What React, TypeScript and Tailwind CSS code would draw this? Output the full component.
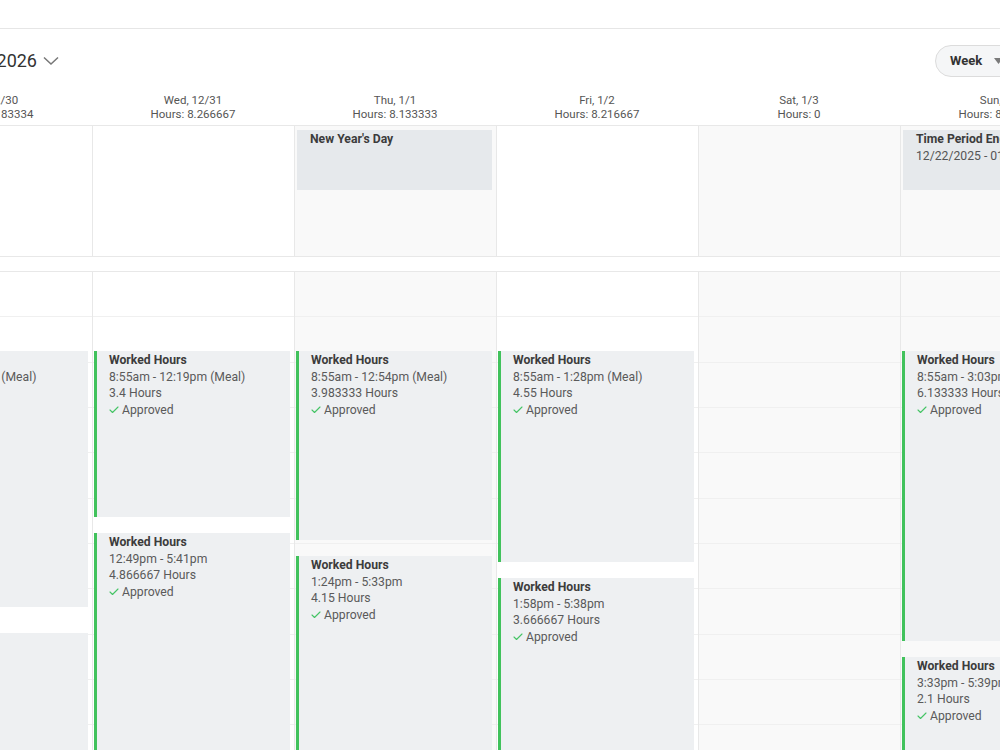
import { Check } from "lucide-react";

type Shift = { top: number; bottom: number; time: string; hours: string };
type Day = {
  label: string;
  hours: string;
  shaded: boolean;
  allDay?: { title: string; sub?: string };
  shifts: Shift[];
};

// y where the hourly grid starts (page coords), events are placed from it
const GRID_TOP = 272;

const days: Day[] = [
  {
    label: "Tue, 12/30",
    hours: "8.183334",
    shaded: false,
    shifts: [
      { top: 351, bottom: 607, time: "8:55am - 2:26pm (Meal)", hours: "5.133333" },
      { top: 633, bottom: 820, time: "2:56pm - 5:59pm", hours: "3.05" },
    ],
  },
  {
    label: "Wed, 12/31",
    hours: "8.266667",
    shaded: false,
    shifts: [
      { top: 351, bottom: 517, time: "8:55am - 12:19pm (Meal)", hours: "3.4" },
      { top: 533, bottom: 820, time: "12:49pm - 5:41pm", hours: "4.866667" },
    ],
  },
  {
    label: "Thu, 1/1",
    hours: "8.133333",
    shaded: true,
    allDay: { title: "New Year's Day" },
    shifts: [
      { top: 351, bottom: 540, time: "8:55am - 12:54pm (Meal)", hours: "3.983333" },
      { top: 556, bottom: 820, time: "1:24pm - 5:33pm", hours: "4.15" },
    ],
  },
  {
    label: "Fri, 1/2",
    hours: "8.216667",
    shaded: false,
    shifts: [
      { top: 351, bottom: 562, time: "8:55am - 1:28pm (Meal)", hours: "4.55" },
      { top: 578, bottom: 820, time: "1:58pm - 5:38pm", hours: "3.666667" },
    ],
  },
  { label: "Sat, 1/3", hours: "0", shaded: true, shifts: [] },
  {
    label: "Sun, 1/4",
    hours: "8.233333",
    shaded: true,
    allDay: { title: "Time Period Ending", sub: "12/22/2025 - 01/04/2026" },
    shifts: [
      { top: 351, bottom: 641, time: "8:55am - 3:03pm", hours: "6.133333" },
      { top: 657, bottom: 820, time: "3:33pm - 5:39pm", hours: "2.1" },
    ],
  },
];

function ShiftCard({ shift }: { shift: Shift }) {
  return (
    <div
      className="absolute left-[1px] right-[4px] border-l-[3px] border-[#41c25c] bg-[#eef0f2] pl-[12px] pt-[1px] text-[12.2px] leading-[16.5px] text-[#5a5a5a]"
      style={{ top: shift.top - GRID_TOP, height: shift.bottom - shift.top }}
    >
      <p className="whitespace-nowrap font-bold text-[#3c3c3c]">Worked Hours</p>
      <p className="whitespace-nowrap">{shift.time}</p>
      <p className="whitespace-nowrap">{shift.hours} Hours</p>
      <p className="flex items-center gap-[2px] whitespace-nowrap">
        <Check size={12} strokeWidth={2.25} className="-ml-[1px] text-[#45c465]" />
        Approved
      </p>
    </div>
  );
}

function DayColumn({ day }: { day: Day }) {
  const shade = day.shaded ? "bg-[#f9f9f9]" : "bg-white";
  return (
    <div className="w-[202px] shrink-0">
      {/* day header */}
      <div className="h-[35px] border-b border-[#e8e8e8] pt-[2px] text-center text-[11.5px] leading-[14px] text-[#555]">
        <p>{day.label}</p>
        <p>Hours: {day.hours}</p>
      </div>

      {/* all-day strip */}
      <div className={`h-[131px] border-b border-l border-[#e8e8e8] pt-[4px] ${shade}`}>
        {day.allDay && (
          <div className="ml-[2px] mr-[4px] h-[60px] overflow-hidden whitespace-nowrap bg-[#e6e9ec] pl-[13px] pt-[1px] text-[12.2px] leading-[16.5px] text-[#555]">
            <p className="font-bold text-[#3c3c3c]">{day.allDay.title}</p>
            {day.allDay.sub && <p>{day.allDay.sub}</p>}
          </div>
        )}
      </div>

      <div className="h-[15px] border-b border-[#e8e8e8] bg-white" />

      {/* hourly grid */}
      <div className={`relative border-l border-[#e8e8e8] ${shade}`}>
        {Array.from({ length: 11 }).map((_, i) => (
          <div key={i} className="h-[45.33px] border-b border-[#f0f0f0]" />
        ))}
        {day.shifts.map((s) => (
          <ShiftCard key={s.top} shift={s} />
        ))}
      </div>
    </div>
  );
}

export default function App() {
  return (
    <div className="h-[750px] w-[1000px] overflow-hidden bg-white font-['Roboto','Liberation_Sans',sans-serif] text-[#333]">
      <div className="h-[29px] border-b border-[#e6e6e6]" />

      {/* toolbar */}
      <div className="flex h-[62px] items-center justify-between">
        <div className="flex items-center">
          <div className="flex w-[37px] justify-end whitespace-nowrap text-[18px] text-[#333]">
            Dec 29, 2025 - Jan 4, 2026
          </div>
          <svg width="16" height="10" viewBox="0 0 16 10" className="ml-[6px] mt-[1px]">
            <polyline points="1,1.5 8,8 15,1.5" fill="none" stroke="#777" strokeWidth="1.5" />
          </svg>
        </div>
        <button className="-mr-[26px] mt-[1px] flex h-[32px] w-[91px] items-center gap-[12px] rounded-full border border-[#dcdcdc] bg-[#f5f6f7] pl-[14px] text-[13px] font-bold text-[#333]">
          Week
          <svg width="9" height="6" viewBox="0 0 9 6">
            <polygon points="0,0 9,0 4.5,6" fill="#7a7a7a" />
          </svg>
        </button>
      </div>

      {/* week grid, scrolled horizontally */}
      <div className="-ml-[110px] flex">
        {days.map((d) => (
          <DayColumn key={d.label} day={d} />
        ))}
      </div>
    </div>
  );
}
